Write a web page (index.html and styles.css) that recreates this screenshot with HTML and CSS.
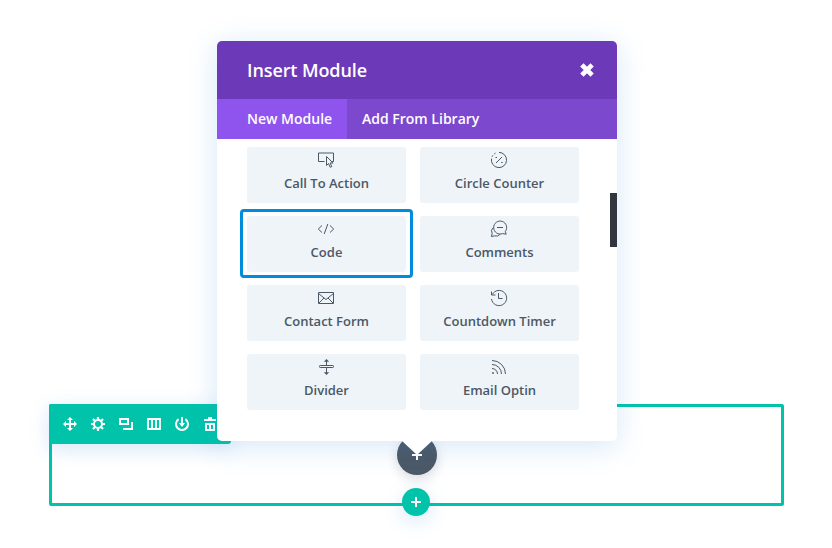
FILE: index.html
```html
<!DOCTYPE html>
<html lang="en">
<head>
<meta charset="utf-8">
<title>Insert Module</title>
<link rel="stylesheet" href="styles.css">
</head>
<body>
<main class="builder">
  <section class="row">
    <div class="toolbar">
      <svg class="tool" viewBox="0 0 14 14"><path d="M7 2v10M2 7h10" stroke="#fff" stroke-width="2"/><path d="M7 0l3 3H4zM7 14l3-3H4zM0 7l3-3v6zM14 7l-3-3v6z" fill="#fff"/></svg>
      <svg class="tool" viewBox="0 0 14 14"><g stroke="#fff" stroke-width="2.2"><path d="M7 0v3M7 11v3M0 7h3M11 7h3M2 2l2.200 2.200M9.800 9.800L12 12M12 2L9.800 4.200M4.200 9.800L2 12"/></g><circle cx="7" cy="7" r="4" fill="none" stroke="#fff" stroke-width="2"/></svg>
      <svg class="tool" viewBox="0 0 14 14"><path d="M1 2h8v5H1zM13 5v7H4" fill="none" stroke="#fff" stroke-width="2"/></svg>
      <svg class="tool" viewBox="0 0 14 14"><path d="M1 2h12v10H1zM5 2v10M9 2v10" fill="none" stroke="#fff" stroke-width="1.800"/></svg>
      <svg class="tool" viewBox="0 0 14 14"><path d="M3.600 2.100A6 6 0 1 0 10.400 2.100" fill="none" stroke="#fff" stroke-width="2"/><path d="M7 0v8" stroke="#fff" stroke-width="2"/><path d="M4 6h6L7 10z" fill="#fff"/></svg>
      <svg class="tool" viewBox="0 0 14 14"><path d="M1 3h12M5 1h4M3 7h8v6H3zM7 7v6" fill="none" stroke="#fff" stroke-width="2"/></svg>
    </div>
    <div class="add add-module"><svg viewBox="0 0 10 10"><path d="M5 0v10M0 5h10" stroke="#fff" stroke-width="2"/></svg></div>
    <div class="add add-row"><svg viewBox="0 0 10 10"><path d="M5 0v10M0 5h10" stroke="#fff" stroke-width="2"/></svg></div>
  </section>

  <div class="modal">
    <header class="modal-header">
      <h1>Insert Module</h1>
      <svg class="close" viewBox="0 0 12 12"><path d="M1.600 1.600l8.800 8.800M10.400 1.600l-8.800 8.800" stroke="#fff" stroke-width="4"/></svg>
    </header>
    <nav class="tabs">
      <span class="tab active">New Module</span>
      <span class="tab">Add From Library</span>
    </nav>
    <div class="modules">
      <div class="card"><svg class="icon" viewBox="0 0 18 18"><path d="M7.500 10.500H1.500v-8.500h15v8.500h-2.500"/><path d="M9.500 5.500v9l2-2 1.700 3.800 1.600-.7-1.700-3.600h3z"/></svg><span>Call To Action</span></div>
      <div class="card"><svg class="icon" viewBox="0 0 18 18"><path d="M9 1.400A7.600 7.600 0 1 1 1.500 7.600M2 5.800l.9-1.500M4.200 3l1.300-.9M6 12l6-6M5.500 6.500h1.500M11.200 11.500h1.500"/></svg><span>Circle Counter</span></div>
      <div class="card selected"><svg class="icon" viewBox="0 0 18 18"><path d="M5 5.500L1.300 9 5 12.500M13 5.500L16.700 9 13 12.500M10.800 4L7.200 14"/></svg><span>Code</span></div>
      <div class="card"><svg class="icon" viewBox="0 0 18 18"><path d="M15.300 11.500l.9 2.700-3.700-.6A6.500 6.500 0 1 1 15.300 11.500zM7 7.500h6"/><path d="M3.400 7.500a4.600 4.600 0 0 0-1.200 6l-.8 3 3.200-.6a5.500 5.500 0 0 0 5.600-1.600"/></svg><span>Comments</span></div>
      <div class="card"><svg class="icon" viewBox="0 0 18 18"><path d="M1.500 3.500h15v11h-15zM1.500 4.500L9 10.500l7.500-6M2 14l5-5M16 14l-5-5"/></svg><span>Contact Form</span></div>
      <div class="card"><svg class="icon" viewBox="0 0 18 18"><path d="M2.300 5.500A7.600 7.600 0 1 1 1.500 10M1.500 2.500v3.500h4M8.500 4v5.500h4"/></svg><span>Countdown Timer</span></div>
      <div class="card"><svg class="icon" viewBox="0 0 18 18"><rect x="2.500" y="7.500" width="14" height="2" rx=".7"/><path d="M9.500 7V2M9.500 10v6"/><path class="solid" d="M9.500 1l2.700 2.700H6.800zM9.500 17l2.700-2.700H6.800z"/></svg><span>Divider</span></div>
      <div class="card"><svg class="icon" viewBox="0 0 18 18"><path d="M2 2.500A13.500 13.500 0 0 1 15.500 16M2 6.500A9.500 9.500 0 0 1 11.500 16M2 10.500A5.500 5.500 0 0 1 7.500 16"/><circle class="solid" cx="3" cy="15" r=".9"/></svg><span>Email Optin</span></div>
    </div>
    <div class="scrollbar"></div>
    <div class="pointer"></div>
  </div>
</main>
</body>
</html>
```

FILE: styles.css
```css
* { box-sizing: border-box; }

body {
  margin: 0;
  background: #fff;
  font-family: "Open Sans", sans-serif;
}

.builder {
  position: relative;
  height: 548px;
  padding: 404px 48px 0 49px;
  overflow: hidden;
}

.row {
  position: relative;
  height: 102px;
  border: 3px solid #00c3aa;
  border-radius: 2px;
}

.toolbar {
  display: flex;
  align-items: center;
  gap: 14px;
  width: 182px;
  height: 40px;
  margin: -3px 0 0 -3px;
  padding-left: 14px;
  background: #00c3aa;
  border-radius: 2px 0 3px 0;
  box-shadow: 0 5px 20px rgba(43, 135, 218, .2);
}

.tool { width: 14px; height: 14px; flex: none; }

.add {
  position: absolute;
  display: flex;
  align-items: center;
  justify-content: center;
  border-radius: 50%;
}

.add svg { width: 10px; height: 10px; }

.add-module {
  left: 345px;
  top: 28px;
  width: 40px;
  height: 40px;
  background: #4c5866;
  box-shadow: 0 4px 12px rgba(60, 70, 90, .2);
}

.add-row {
  left: 350px;
  top: 81px;
  width: 28px;
  height: 28px;
  background: #00c3aa;
  box-shadow: 0 5px 20px rgba(43, 135, 218, .2);
}

.modal {
  position: absolute;
  left: 217px;
  top: 41px;
  width: 400px;
  height: 400px;
  background: #fff;
  border-radius: 5px;
  box-shadow: 0 5px 30px rgba(43, 135, 218, .2);
}

.modal-header {
  display: flex;
  align-items: center;
  justify-content: space-between;
  height: 58px;
  padding: 0 23px 0 30px;
  background: #6c3ab8;
  border-radius: 5px 5px 0 0;
}

.modal-header h1 {
  margin: 0;
  color: #fff;
  font-size: 18px;
  font-weight: 600;
  letter-spacing: -.1px;
}

.close { width: 14px; height: 14px; }

.tabs {
  display: flex;
  height: 40px;
  background: #7c48ce;
}

.tab {
  padding: 0 15px;
  color: #fff;
  font-size: 14px;
  font-weight: 600;
  line-height: 40px;
  white-space: nowrap;
}

.tab.active {
  width: 130px;
  padding-left: 30px;
  background: #8f53ee;
}

.modules {
  display: grid;
  grid-template-columns: 159px 159px;
  grid-auto-rows: 56px;
  gap: 13px 14px;
  padding: 8px 30px 0;
}

.card {
  position: relative;
  display: flex;
  flex-direction: column;
  align-items: center;
  padding-top: 4px;
  background: #eff4f9;
  border-radius: 3px;
  color: #4c5866;
  font-size: 13px;
  font-weight: 600;
  line-height: 18px;
}

.card span { margin-top: 5px; }

.selected::after {
  content: "";
  position: absolute;
  inset: -7px -7px -6px;
  border: 3px solid #008bdb;
  border-radius: 4px;
}

.icon {
  width: 18px;
  height: 18px;
  margin-right: 1px;
  fill: none;
  stroke: #4c5866;
  stroke-width: 1;
}

.icon .solid { fill: #4c5866; stroke: none; }

.scrollbar {
  position: absolute;
  top: 152px;
  right: 0;
  width: 7px;
  height: 54px;
  background: #32373f;
}

.pointer {
  position: absolute;
  top: 399px;
  left: 184px;
  width: 32px;
  height: 15px;
  background: #fff;
  clip-path: polygon(0 0, 100% 0, 50% 100%);
}
```
